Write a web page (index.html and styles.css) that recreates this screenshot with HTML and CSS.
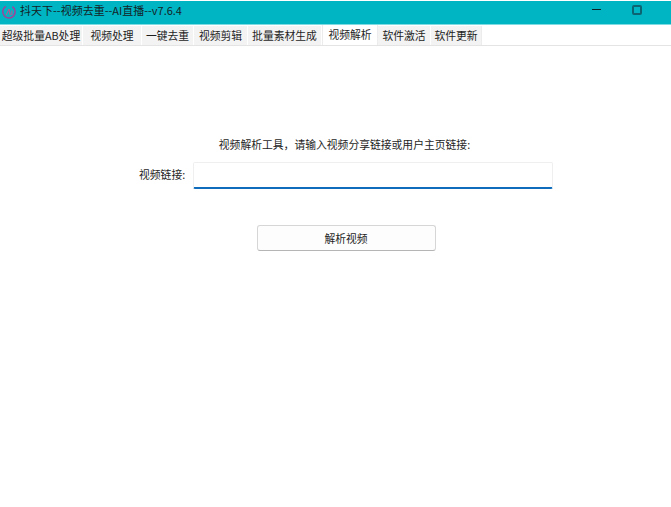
FILE: index.html
```html
<!DOCTYPE html>
<html lang="zh-CN">
<head>
<meta charset="utf-8">
<title>抖天下</title>
<link rel="stylesheet" href="styles.css">
</head>
<body>
<header class="titlebar">
  <svg class="logo" width="16" height="16" viewBox="0 0 16 16" fill="none">
    <path d="M4.8 2.4A6.2 6.2 0 1 0 11.4 2.6" stroke="#a2409a" stroke-width="1.5"/>
    <path d="M5.2 11 8 5l1.2 6M10.9 6.5v4.5" stroke="#c8508f" stroke-width="1"/>
  </svg>
  <span class="title">抖天下--视频去重--AI直播--v7.6.4</span>
  <div class="controls">
    <span class="minimize"></span>
    <span class="maximize"></span>
  </div>
</header>
<nav class="tabs">
  <span class="tab tab-1">超级批量AB处理</span>
  <span class="tab tab-2">视频处理</span>
  <span class="tab tab-3">一键去重</span>
  <span class="tab tab-4">视频剪辑</span>
  <span class="tab tab-5">批量素材生成</span>
  <span class="tab tab-6 active">视频解析</span>
  <span class="tab tab-7">软件激活</span>
  <span class="tab tab-8">软件更新</span>
</nav>
<main class="content">
  <p class="hint">视频解析工具，请输入视频分享链接或用户主页链接:</p>
  <div class="field">
    <label class="label" for="url">视频链接:</label>
    <input class="input" id="url" type="text">
  </div>
  <button class="button" type="button">解析视频</button>
</main>
</body>
</html>
```
FILE: styles.css
```css
* { box-sizing: border-box; }
html, body { margin: 0; height: 100%; }
body {
  width: 671px;
  height: 507px;
  overflow: hidden;
  background: #fff;
  color: #1e1e1e;
  font-family: "Noto Sans CJK SC", "Liberation Sans", sans-serif;
  font-size: 10.8px;
  display: flex;
  flex-direction: column;
}
.titlebar {
  height: 24px;
  margin-top: 1px;
  background: #00b5c3;
  border-bottom: 1px solid #7fdbe2;
  display: flex;
  align-items: center;
  padding-left: 1px;
  flex: none;
}
.logo { flex: none; margin-top: -2px; }
.title { margin-left: 3px; font-size: 11px; color: #142225; white-space: nowrap; margin-top: -6px; }
.controls { margin-left: auto; display: flex; align-items: flex-start; height: 100%; }
.minimize { width: 9px; height: 1px; background: #0b2428; margin: 8px 31px 0 0; }
.maximize { width: 10px; height: 10px; border: 2px solid #0c6472; border-radius: 2px; margin: 4px 29px 0 0; }
.tabs {
  height: 21px;
  display: flex;
  align-items: stretch;
  border-bottom: 1px solid #e4e4e4;
  flex: none;
}
.tab {
  background: #f3f3f3;
  border-right: 1px solid #fff;
  margin-top: 1px;
  text-align: center;
  line-height: 19px;
  white-space: nowrap;
  flex: none;
}
.tab-1 { width: 83px; }
.tab-2 { width: 59px; }
.tab-3 { width: 52px; }
.tab-4 { width: 54px; }
.tab-5 { width: 74px; }
.tab-6 { width: 56px; }
.tab-7 { width: 53px; }
.tab-8 { width: 51px; border-right: 1px solid #ececec; }
.active { background: #fff; margin-top: 0; line-height: 18px; border-left: 1px solid #ececec; border-right: 1px solid #ececec; }
.content {
  flex: 1;
  display: flex;
  flex-direction: column;
  align-items: center;
}
.hint { margin: 89px 0 0 18px; height: 18px; line-height: 18px; }
.field { display: flex; align-items: center; margin: 9px 0 0 23px; width: 416px; }
.label { width: 54px; flex: none; white-space: nowrap; margin-top: -4px; }
.input {
  width: 360px;
  height: 27px;
  border: 1px solid #efefef;
  border-bottom: 2px solid #0f6cbd;
  border-radius: 2px;
  background: #fff;
  outline: none;
  padding: 0;
}
.button {
  margin: 36px 0 0 21px;
  width: 179px;
  height: 26px;
  background: #fdfdfd;
  border: 1px solid #d6d6d6;
  border-bottom-color: #b5b5b5;
  border-radius: 3px;
  color: #1e1e1e;
  font: inherit;
  padding: 0;
}
```
